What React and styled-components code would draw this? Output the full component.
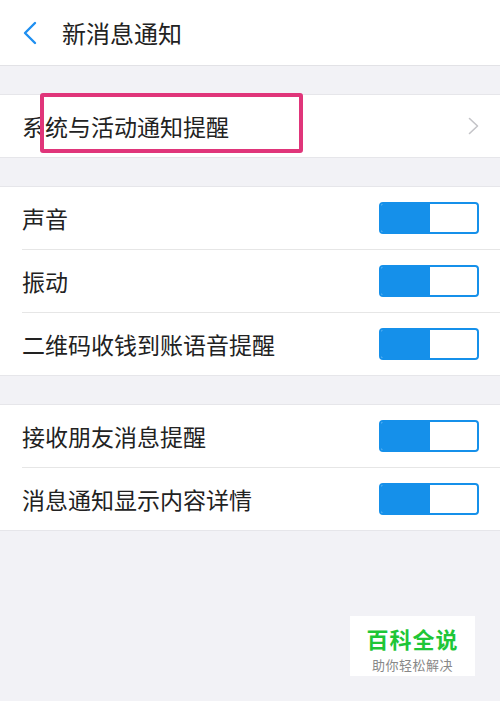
import React from "react";
import styled, { createGlobalStyle } from "styled-components";

const GlobalStyle = createGlobalStyle`
  html, body {
    margin: 0;
    padding: 0;
    background: #f2f2f6;
  }
  body {
    font-family: "Noto Sans CJK SC", "Noto Sans", sans-serif;
  }
`;

const sections = [
  [{ label: "系统与活动通知提醒", type: "link", highlight: true }],
  [
    { label: "声音", type: "toggle" },
    { label: "振动", type: "toggle" },
    { label: "二维码收钱到账语音提醒", type: "toggle" },
  ],
  [
    { label: "接收朋友消息提醒", type: "toggle" },
    { label: "消息通知显示内容详情", type: "toggle" },
  ],
];

const App = () => {
  return (
    <Page>
      <GlobalStyle />
      <Header>
        <BackIcon viewBox="0 0 16 24">
          <path
            d="M13 2 L3 12 L13 22"
            fill="none"
            stroke="#1f8ff0"
            strokeWidth="2.4"
            strokeLinecap="round"
            strokeLinejoin="round"
          />
        </BackIcon>
        <Title>新消息通知</Title>
      </Header>
      {sections.map((rows, i) => (
        <Section key={i}>
          {rows.map((row) => (
            <Row key={row.label}>
              <Label>{row.label}</Label>
              {row.type === "toggle" ? (
                <Toggle>
                  <ToggleOn />
                  <ToggleOff />
                </Toggle>
              ) : (
                <Chevron viewBox="0 0 11 18">
                  <path
                    d="M1.5 1.5 L9.5 9 L1.5 16.5"
                    fill="none"
                    stroke="#c4c4c8"
                    strokeWidth="1.6"
                    strokeLinecap="round"
                    strokeLinejoin="round"
                  />
                </Chevron>
              )}
              {row.highlight && <Highlight />}
            </Row>
          ))}
        </Section>
      ))}
      <Watermark>
        <Brand>百科全说</Brand>
        <Slogan>助你轻松解决</Slogan>
      </Watermark>
    </Page>
  );
};

const Page = styled.div`
  position: relative;
  width: 500px;
  height: 701px;
  background: #f2f2f6;
  overflow: hidden;
`;

const Header = styled.div`
  display: flex;
  align-items: center;
  height: 66px;
  padding-left: 22px;
  background: #fff;
  border-bottom: 1px solid #e2e2e6;
  box-sizing: border-box;
`;

const BackIcon = styled.svg`
  width: 16px;
  height: 24px;
  margin-right: 24px;
`;

const Title = styled.div`
  font-size: 24px;
  color: #222;
`;

const Section = styled.div`
  margin-top: 28px;
  background: #fff;
  border-top: 1px solid #e6e6ea;
  border-bottom: 1px solid #e6e6ea;
`;

const Row = styled.div`
  position: relative;
  display: flex;
  align-items: center;
  justify-content: space-between;
  height: 62px;
  margin-left: 22px;
  padding-right: 21px;
  & + & {
    border-top: 1px solid #e6e6e6;
  }
`;

const Label = styled.div`
  font-size: 23px;
  color: #222;
`;

const Toggle = styled.div`
  display: flex;
  width: 100px;
  height: 32px;
  border-radius: 4px;
  border: 2px solid #1590ea;
  box-sizing: border-box;
  overflow: hidden;
`;

const ToggleOn = styled.div`
  width: 49px;
  background: #1590ea;
`;

const ToggleOff = styled.div`
  flex: 1;
  background: #fff;
  border-radius: 3px;
`;

const Chevron = styled.svg`
  width: 11px;
  height: 18px;
`;

const Highlight = styled.div`
  position: absolute;
  left: 18px;
  top: -2px;
  width: 263px;
  height: 60px;
  border: 4px solid #e0357a;
  border-radius: 3px;
  box-sizing: border-box;
`;

const Watermark = styled.div`
  position: absolute;
  left: 350px;
  top: 616px;
  width: 125px;
  height: 60px;
  padding-top: 10px;
  box-sizing: border-box;
  background: #fff;
  display: flex;
  flex-direction: column;
  align-items: center;
  gap: 8px;
`;

const Brand = styled.div`
  font-size: 22px;
  font-weight: 700;
  color: #1ec637;
  line-height: 24px;
  letter-spacing: 1px;
`;

const Slogan = styled.div`
  font-size: 13px;
  color: #888;
  line-height: 14px;
  letter-spacing: 0.5px;
`;

export default App;
